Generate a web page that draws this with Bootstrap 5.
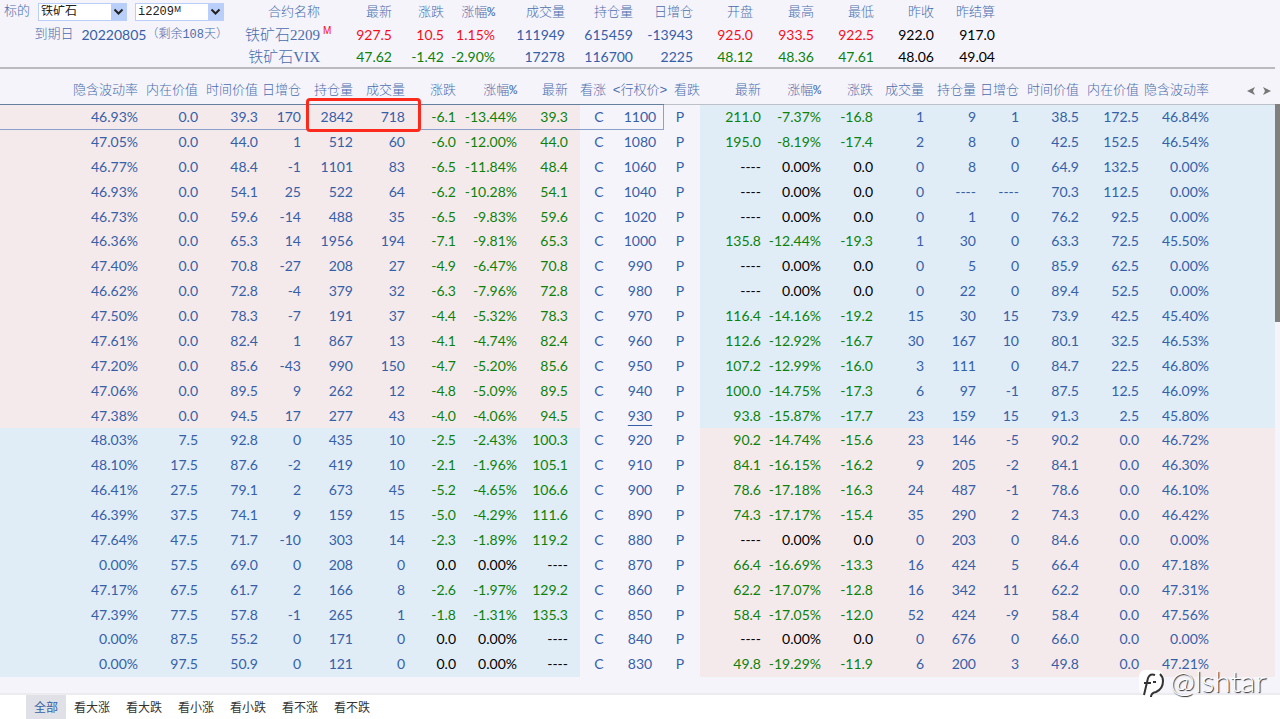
<!DOCTYPE html>
<html lang="zh-CN">
<head>
<meta charset="utf-8">
<meta name="viewport" content="width=device-width, initial-scale=1">
<title>期权T型报价 - 铁矿石</title>
<link href="https://cdn.jsdelivr.net/npm/bootstrap@5.3.0/dist/css/bootstrap.min.css" rel="stylesheet">
<style>
  :root { --ink: #3560a8; --head: #4a6dae; --pink: #f5eaeb; --sky: #e0edf7; --page: #f5f4fa; }
  body { background: var(--page); color: var(--ink); font: 14px/20px Lato, "Noto Sans CJK SC", sans-serif; }
  .cjk { font: 300 13px/20px "Liberation Mono", "Noto Sans CJK SC", sans-serif; color: var(--head); }
  .up { color: #f50f19; }
  .down { color: #0c820c; }
  .flat { color: #000; }
  .quote-bar { border-bottom: 2px solid #bababc; margin-right: 5px; height: 69px; }
  .filters { width: 228px; }
  .filters .pick { width: 89px; height: 18px; padding: 0 16px 0 2px; border: 1px solid #b9cffa; border-radius: 0;
    font: 12px/14px "Liberation Mono", "Noto Sans CJK SC", sans-serif; color: #222; appearance: none;
    background: #fff url("data:image/svg+xml,%3Csvg xmlns='http://www.w3.org/2000/svg' width='15' height='18'%3E%3Crect width='15' height='18' fill='%23b9cffa'/%3E%3Cpath d='M3.5 6.5l4 4 4-4' fill='none' stroke='%23222' stroke-width='2'/%3E%3C/svg%3E") right center no-repeat; }
  .filter-row { height: 23px; }
  .remaining { font-size: 12px; }
  .quotes { table-layout: fixed; width: 767px; margin-top: 1px; }
  .quotes tr { height: 22px; }
  .quotes tr:first-child { height: 23px; }
  .quotes th, .quotes td, .chain th, .chain td { padding: 0; text-align: right; white-space: nowrap; line-height: 20px; }
  .contract { font: 300 15px/20px "Liberation Serif", "Noto Sans CJK SC", serif; color: var(--head); }
  .main-mark { left: 100%; top: -4px; padding-left: 3px; font: 10px/16px "Liberation Sans", sans-serif; color: #f50f19; }
  .chain { table-layout: fixed; }
  .chain thead th { height: 35px; padding-top: 10px; border-bottom: 1px solid #bcc0c8; }
  .chain thead th:nth-child(-n+11) { border-bottom-color: #64809f; }
  .chain .call-end { padding-right: 12px; }
  .chain .call-head { text-align: left; }
  .chain .mid { text-align: center; }
  .chain .call-mark { padding-left: 2px; }
  .chain .put-mark { padding-right: 4px; }
  .pink { background: var(--pink); }
  .sky { background: var(--sky); }
  .chain tr.picked td:nth-child(-n+10) { box-shadow: inset 0 -1px #8ba1cd; }
  .chain tr.picked td:nth-child(11) { box-shadow: inset -1px -1px #8ba1cd; }
  .atm { text-decoration: underline; text-underline-offset: 4px; }
  .callout { left: 5px; top: -7px; width: 115px; height: 34px; border: 3px solid #fb2a1c; border-radius: 4px; pointer-events: none; }
  .scroll-track { width: 5px; padding-top: 35px; }
  .scroll-thumb { height: 38%; background: #808080; }
  .arrow { width: 16px; height: 16px; padding: 0; border: 0; background: none; line-height: 1; vertical-align: text-bottom; }
  .arrow svg { display: block; margin: 0 auto; }
  .tabs { background: #fff; border-top: 2px solid #ebebf0; height: 26px; margin-top: 16px; padding-left: 26px; }
  .tabs button { border: 0; padding: 0 8px; background: none; color: #333; font: 12px/24px "Noto Sans CJK SC", sans-serif; }
  .tabs button.active { background: #e0e0e7; color: var(--ink); }
  .watermark { right: 14px; bottom: 20px; pointer-events: none; color: #fff; font: 300 30px/22px Lato, sans-serif; text-shadow: 1px 1px 1px #222; }
</style>
</head>
<body class="vh-100 d-flex flex-column overflow-hidden">
<header class="quote-bar d-flex flex-shrink-0">
  <form class="filters flex-shrink-0">
    <div class="filter-row d-flex align-items-center">
      <label for="underlying" class="cjk ps-1 pe-1 me-1">标的</label>
      <select id="underlying" class="pick"><option>铁矿石</option></select>
      <select id="month" class="pick ms-2" aria-label="合约月份"><option>i2209ᴹ</option></select>
    </div>
    <div class="filter-row d-flex align-items-center justify-content-end text-nowrap">
      <span class="cjk me-2">到期日</span><span>20220805</span><span class="cjk remaining">（剩余108天）</span>
    </div>
  </form>
  <table class="quotes">
    <colgroup id="quoteCols"></colgroup>
    <tbody id="quoteBody"></tbody>
  </table>
</header>

<main class="d-flex flex-fill" style="min-height:0">
  <table class="chain w-100">
    <colgroup id="chainCols"></colgroup>
    <thead><tr id="chainHead"></tr></thead>
    <tbody id="chainBody"></tbody>
  </table>
  <div class="scroll-track flex-shrink-0"><div class="scroll-thumb"></div></div>
</main>

<nav class="tabs d-flex flex-shrink-0">
  <button type="button" class="active">全部</button>
  <button type="button">看大涨</button>
  <button type="button">看大跌</button>
  <button type="button">看小涨</button>
  <button type="button">看小跌</button>
  <button type="button">看不涨</button>
  <button type="button">看不跌</button>
</nav>

<div class="watermark position-absolute d-flex align-items-start">
  <svg width="28" height="30" viewBox="0 0 28 30" aria-hidden="true">
    <path d="M8 1H19Q26 2 26 12Q26 20 18 23L14 29L11 26H8Q1 26 1 18V9Q1 1 8 1Z" fill="#fff"/>
    <path d="M6 26L10 9Q12 4 17 6M6 14h7M15 13h3M13 28Q13 24 18 23Q25 20 25 12Q25 8 22 5" fill="none" stroke="#333" stroke-width="2"/>
  </svg>
  <span class="ps-1">@lshtar</span>
</div>

<script>
const cols = widths => widths.map(w => `<col${w ? ` style="width:${w}px"` : ''}>`).join('');
const tone = s => s.startsWith('-') && s !== '----' ? 'down' : 'flat';

// Underlying quotes
document.getElementById('quoteCols').innerHTML = cols([92, 72, 52, 51, 70, 68, 60, 60, 61, 60, 60, 61]);
const heads = '合约名称 最新 涨跌 涨幅% 成交量 持仓量 日增仓 开盘 最高 最低 昨收 昨结算'.split(' ');
const quotes = [
  ['铁矿石2209', 'up', '927.5 10.5 1.15% 111949 615459 -13943 925.0 933.5 922.5 922.0 917.0'],
  ['铁矿石VIX', 'down', '47.62 -1.42 -2.90% 17278 116700 2225 48.12 48.36 47.61 48.06 49.04']
];
document.getElementById('quoteBody').innerHTML =
  `<tr>${heads.map(h => `<th class="cjk" scope="col">${h}</th>`).join('')}</tr>` +
  quotes.map(([name, dir, values], r) => `<tr><th class="contract" scope="row"><span class="position-relative">${name}${r ? '' : '<span class="main-mark position-absolute">M</span>'}</span></th>` +
    values.split(' ').map((v, i) => `<td class="${i > 8 ? 'flat' : i > 2 && i < 6 ? '' : dir}">${v}</td>`).join('') + '</tr>').join('');

// Option chain: calls | strike | puts
document.getElementById('chainCols').innerHTML = cols([138, 60, 60, 43, 52, 52, 51, 61, 63, 36, 48, 36, 61, 60, 52, 51, 52, 43, 60, 60, 70, 0]);
const chainHeads = '隐含波动率 内在价值 时间价值 日增仓 持仓量 成交量 涨跌 涨幅% 最新 看涨 &lt;行权价&gt; 看跌 最新 涨幅% 涨跌 成交量 持仓量 日增仓 时间价值 内在价值 隐含波动率'.split(' ');
document.getElementById('chainHead').innerHTML = chainHeads.map((h, i) =>
  `<th scope="col" class="cjk ${i === 8 ? 'call-end' : i === 9 ? 'call-head' : ''}">${i === 10 ? `<span class="d-flex justify-content-center">${h}</span>` : h}</th>`).join('') +
  `<th><button class="arrow" type="button" aria-label="向左"><svg width="8" height="8" viewBox="0 0 8 8"><path d="M8 0L0 4l8 4-2-4z" fill="#777"/></svg></button><button class="arrow" type="button" aria-label="向右"><svg width="8" height="8" viewBox="0 0 8 8"><path d="M0 0l8 4-8 4 2-4z" fill="#777"/></svg></button></th>`;

const chain = `46.93% 0.0 39.3 170 2842 718 -6.1 -13.44% 39.3 1100 211.0 -7.37% -16.8 1 9 1 38.5 172.5 46.84%
47.05% 0.0 44.0 1 512 60 -6.0 -12.00% 44.0 1080 195.0 -8.19% -17.4 2 8 0 42.5 152.5 46.54%
46.77% 0.0 48.4 -1 1101 83 -6.5 -11.84% 48.4 1060 ---- 0.00% 0.0 0 8 0 64.9 132.5 0.00%
46.93% 0.0 54.1 25 522 64 -6.2 -10.28% 54.1 1040 ---- 0.00% 0.0 0 ---- ---- 70.3 112.5 0.00%
46.73% 0.0 59.6 -14 488 35 -6.5 -9.83% 59.6 1020 ---- 0.00% 0.0 0 1 0 76.2 92.5 0.00%
46.36% 0.0 65.3 14 1956 194 -7.1 -9.81% 65.3 1000 135.8 -12.44% -19.3 1 30 0 63.3 72.5 45.50%
47.40% 0.0 70.8 -27 208 27 -4.9 -6.47% 70.8 990 ---- 0.00% 0.0 0 5 0 85.9 62.5 0.00%
46.62% 0.0 72.8 -4 379 32 -6.3 -7.96% 72.8 980 ---- 0.00% 0.0 0 22 0 89.4 52.5 0.00%
47.50% 0.0 78.3 -7 191 37 -4.4 -5.32% 78.3 970 116.4 -14.16% -19.2 15 30 15 73.9 42.5 45.40%
47.61% 0.0 82.4 1 867 13 -4.1 -4.74% 82.4 960 112.6 -12.92% -16.7 30 167 10 80.1 32.5 46.53%
47.20% 0.0 85.6 -43 990 150 -4.7 -5.20% 85.6 950 107.2 -12.99% -16.0 3 111 0 84.7 22.5 46.80%
47.06% 0.0 89.5 9 262 12 -4.8 -5.09% 89.5 940 100.0 -14.75% -17.3 6 97 -1 87.5 12.5 46.09%
47.38% 0.0 94.5 17 277 43 -4.0 -4.06% 94.5 930 93.8 -15.87% -17.7 23 159 15 91.3 2.5 45.80%
48.03% 7.5 92.8 0 435 10 -2.5 -2.43% 100.3 920 90.2 -14.74% -15.6 23 146 -5 90.2 0.0 46.72%
48.10% 17.5 87.6 -2 419 10 -2.1 -1.96% 105.1 910 84.1 -16.15% -16.2 9 205 -2 84.1 0.0 46.30%
46.41% 27.5 79.1 2 673 45 -5.2 -4.65% 106.6 900 78.6 -17.18% -16.3 24 487 -1 78.6 0.0 46.10%
46.39% 37.5 74.1 9 159 15 -5.0 -4.29% 111.6 890 74.3 -17.17% -15.4 35 290 2 74.3 0.0 46.42%
47.64% 47.5 71.7 -10 303 14 -2.3 -1.89% 119.2 880 ---- 0.00% 0.0 0 203 0 84.6 0.0 0.00%
0.00% 57.5 69.0 0 208 0 0.0 0.00% ---- 870 66.4 -16.69% -13.3 16 424 5 66.4 0.0 47.18%
47.17% 67.5 61.7 2 166 8 -2.6 -1.97% 129.2 860 62.2 -17.07% -12.8 16 342 11 62.2 0.0 47.31%
47.39% 77.5 57.8 -1 265 1 -1.8 -1.31% 135.3 850 58.4 -17.05% -12.0 52 424 -9 58.4 0.0 47.56%
0.00% 87.5 55.2 0 171 0 0.0 0.00% ---- 840 ---- 0.00% 0.0 0 676 0 66.0 0.0 0.00%
0.00% 97.5 50.9 0 121 0 0.0 0.00% ---- 830 49.8 -19.29% -11.9 6 200 3 49.8 0.0 47.21%`.split('\n').map(l => l.split(' '));

document.getElementById('chainBody').innerHTML = chain.map((row, r) => {
  const strike = +row[9], above = strike >= 930;
  const callBg = above ? 'pink' : 'sky', putBg = above ? 'sky' : 'pink';
  const callTone = tone(row[6]), putTone = tone(row[12]);
  const calls = row.slice(0, 9).map((v, i) =>
    `<td class="${callBg} ${i > 5 ? callTone : ''} ${i === 8 ? 'call-end' : ''} ${r === 0 && i === 4 ? 'position-relative' : ''}">${v}${r === 0 && i === 4 ? '<span class="callout position-absolute"></span>' : ''}</td>`).join('');
  const puts = row.slice(10).map((v, i) => `<td class="${putBg} ${i < 3 ? putTone : ''}">${v}</td>`).join('');
  return `<tr class="${r === 0 ? 'picked' : ''}">${calls}<td class="mid call-mark">C</td><td class="mid"><span class="${strike === 930 ? 'atm' : ''}">${strike}</span></td><td class="mid put-mark">P</td>${puts}<td class="${putBg}"></td></tr>`;
}).join('');
</script>
<script src="https://cdn.jsdelivr.net/npm/bootstrap@5.3.0/dist/js/bootstrap.bundle.min.js"></script>
</body>
</html>
